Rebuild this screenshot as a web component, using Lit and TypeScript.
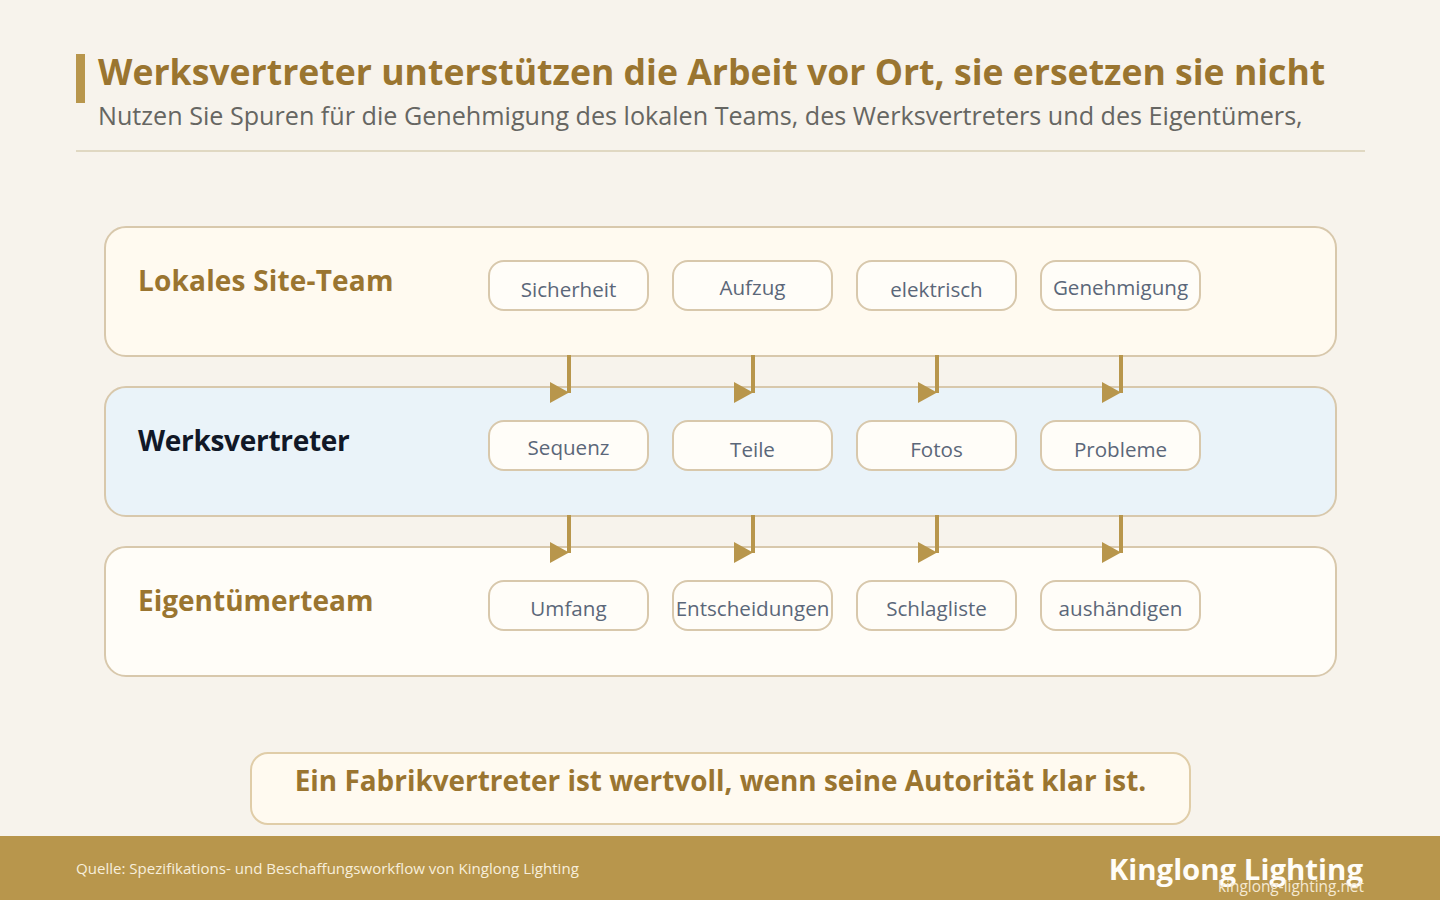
import { LitElement, html, css, svg } from "lit";
import { customElement } from "lit/decorators.js";
import { styleMap } from "lit/directives/style-map.js";

const rows = [
  { cls: "local", title: "Lokales Site-Team", pills: [["Sicherheit", 6], ["Aufzug", 3], ["elektrisch", 6], ["Genehmigung", 3]], arrows: true },
  { cls: "factory", title: "Werksvertreter", pills: [["Sequenz", 2], ["Teile", 6], ["Fotos", 7], ["Probleme", 6]], arrows: true },
  { cls: "owner", title: "Eigentümerteam", pills: [["Umfang", 4], ["Entscheidungen", 4], ["Schlagliste", 4], ["aushändigen", 4]], arrows: false },
];

@customElement("app-root")
export class AppRoot extends LitElement {
  static styles = css`
    :host { display: block; width: 1440px; height: 900px; overflow: hidden; background: #f7f3ec;
      font-family: "Open Sans", "Noto Sans", sans-serif; }
    .page { display: flex; flex-direction: column; height: 900px; box-sizing: border-box; }
    .head { margin: 54px 75px 0 76px; padding-bottom: 17px; border-bottom: 2px solid #e0d8c2; display: flex; gap: 13px; }
    .bar { width: 9px; height: 49px; background: #b8964c; flex: none; }
    h1 { margin: 0; font-size: 35.6px; line-height: 34px; font-weight: 700; color: #9a7530; white-space: nowrap; }
    .sub { font-size: 25.15px; line-height: 36px; color: #666662; margin-top: 9px; white-space: nowrap; }
    .rows { display: flex; flex-direction: column; gap: 29px; margin: 74px 103px 0 104px; }
    .row { position: relative; box-sizing: border-box; height: 131px; border: 2px solid #d8c8ac; border-radius: 22px;
      display: flex; padding: 32px 0 0 32px; }
    .local { background: #fffaf0; }
    .factory { background: #eaf3f9; }
    .owner { background: #fffdf8; }
    .label { width: 350px; flex: none; font-size: 28px; line-height: 40px; font-weight: 700; color: #9a7530; }
    .local .label { letter-spacing: 0.18px; }
    .factory .label { color: #111827; letter-spacing: -0.3px; }
    .pills { display: flex; gap: 23px; }
    .pill { box-sizing: border-box; width: 161px; height: 51px; border: 2px solid #d8c8ac; border-radius: 16px; background: #fffdf8;
      font-size: 20.6px; color: #5b6779; display: flex; align-items: center; justify-content: center; white-space: nowrap; }
    .arrow { position: absolute; z-index: 1; top: 127px; width: 24px; height: 48px; overflow: visible; }
    .cta { box-sizing: border-box; margin: 75px 0 0 250px; width: 941px; height: 73px; border: 2px solid #e0cda8; border-radius: 18px; background: #fffaf0;
      text-align: center; font-size: 27.9px; line-height: 52px; font-weight: 700; color: #9a7530; }
    footer { margin-top: auto; height: 64px; background: #b8964c; position: relative; display: flex; align-items: center; justify-content: space-between; padding: 0 77px 0 76px; box-sizing: border-box; }
    .src { font-size: 15.07px; color: #f7eedb; }
    .brand { font-size: 29.4px; line-height: 40px; font-weight: 700; color: #fffdf8; margin-top: 2px; }
    .url { position: absolute; right: 76px; top: 41px; font-size: 15.4px; line-height: 20px; color: #f5e9d2; }
  `;

  private arrow(i: number) {
    const left = 444 + i * 184;
    return html`<svg class="arrow" style=${styleMap({ left: left + "px" })} viewBox="0 0 24 48">
      ${svg`<rect x="17" y="0" width="4" height="38" fill="#b8964c"/><polygon points="0,27 19,37.5 0,48" fill="#b8964c"/>`}
    </svg>`;
  }

  render() {
    return html`<div class="page">
      <header class="head">
        <div class="bar"></div>
        <div>
          <h1>Werksvertreter unterstützen die Arbeit vor Ort, sie ersetzen sie nicht</h1>
          <div class="sub">Nutzen Sie Spuren für die Genehmigung des lokalen Teams, des Werksvertreters und des Eigentümers,</div>
        </div>
      </header>
      <section class="rows">
        ${rows.map((r) => html`<div class="row ${r.cls}">
          <div class="label">${r.title}</div>
          <div class="pills">${r.pills.map((p) => html`<div class="pill" style=${styleMap({ paddingTop: p[1] + "px" })}>${p[0]}</div>`)}</div>
          ${r.arrows ? [0, 1, 2, 3].map((i) => this.arrow(i)) : ""}
        </div>`)}
      </section>
      <div class="cta">Ein Fabrikvertreter ist wertvoll, wenn seine Autorität klar ist.</div>
      <footer>
        <div class="src">Quelle: Spezifikations- und Beschaffungsworkflow von Kinglong Lighting</div>
        <div class="brand">Kinglong Lighting</div>
        <div class="url">kinglong-lighting.net</div>
      </footer>
    </div>`;
  }
}
